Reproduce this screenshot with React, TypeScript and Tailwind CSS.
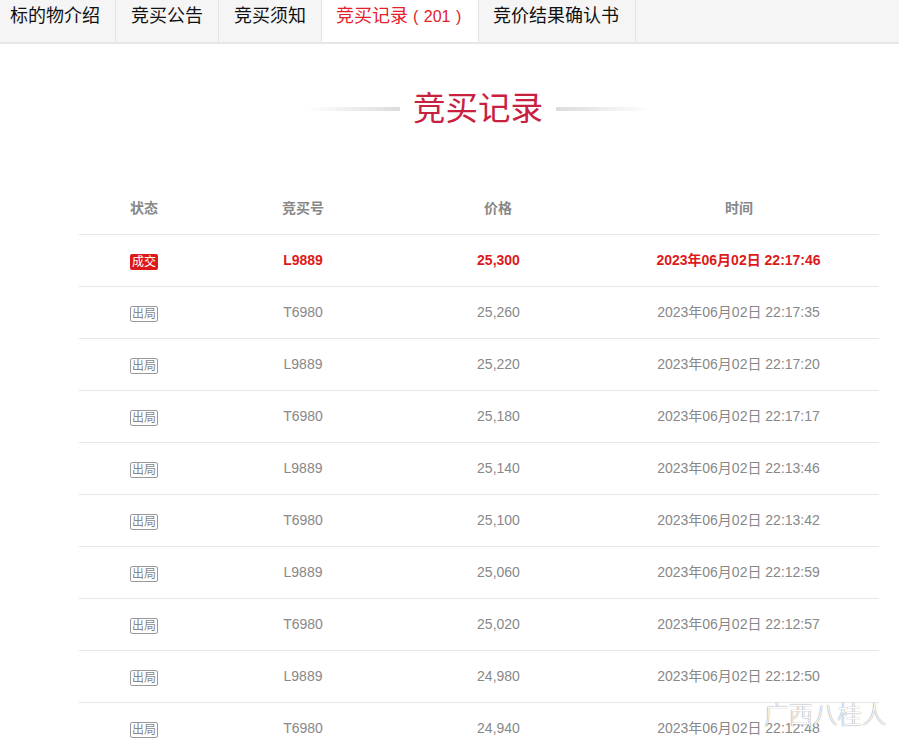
const cjk = "font-['Liberation_Sans','Noto_Sans_CJK_SC',sans-serif]";

const tabs = [
  { label: "标的物介绍", w: "w-[116px]", pl: "pl-[10px]" },
  { label: "竞买公告", w: "w-[103px]", pl: "pl-[15px]" },
  { label: "竞买须知", w: "w-[103px]", pl: "pl-[15px]" },
  { label: "竞买记录", w: "w-[157px]", pl: "pl-[14px]", active: true },
  { label: "竞价结果确认书", w: "w-[157px]", pl: "pl-[14px]" },
];

const rows = [
  ["L9889", "25,300", "2023年06月02日 22:17:46"],
  ["T6980", "25,260", "2023年06月02日 22:17:35"],
  ["L9889", "25,220", "2023年06月02日 22:17:20"],
  ["T6980", "25,180", "2023年06月02日 22:17:17"],
  ["L9889", "25,140", "2023年06月02日 22:13:46"],
  ["T6980", "25,100", "2023年06月02日 22:13:42"],
  ["L9889", "25,060", "2023年06月02日 22:12:59"],
  ["T6980", "25,020", "2023年06月02日 22:12:57"],
  ["L9889", "24,980", "2023年06月02日 22:12:50"],
  ["T6980", "24,940", "2023年06月02日 22:12:48"],
];

const gridCols = "grid grid-cols-[130px_188px_202px_280px] items-center text-center";

export default function App() {
  return (
    <div className={`relative h-[745px] w-[899px] overflow-hidden bg-white ${cjk}`}>
      <div className="flex h-[44px] border-b-2 border-[#e6e6e6] bg-[#f5f5f5]">
        {tabs.map((t) => (
          <div
            key={t.label}
            className={`${t.w} ${t.pl} h-[42px] border-r border-[#e4e4e4] pt-[2px] text-[18px] leading-[28px] whitespace-nowrap ${
              t.active ? "bg-white text-[#e4202c]" : "text-[#111]"
            }`}
          >
            {t.label}
            {t.active && (
              <span className="ml-[5px] text-[16px]">
                ( <span className="mx-[1px]">201</span> )
              </span>
            )}
          </div>
        ))}
      </div>

      <div className="mt-[43px] flex items-center justify-center pl-[57px]">
        <div className="h-[4px] w-[96px] bg-gradient-to-r from-white to-[#dcdcdc]" />
        <h1 className="mx-[13px] text-[32.5px] leading-[44px] font-normal text-[#c8203f]">竞买记录</h1>
        <div className="h-[4px] w-[96px] bg-gradient-to-r from-[#dcdcdc] to-white" />
      </div>

      <div className="ml-[79px] mt-[51px] w-[800px]">
        <div className={`${gridCols} h-[53px] border-b border-[#e6e6e6] text-[14px] font-bold text-[#888]`}>
          <div>状态</div>
          <div>竞买号</div>
          <div>价格</div>
          <div>时间</div>
        </div>
        {rows.map((r, i) => {
          const win = i === 0;
          return (
            <div
              key={i}
              className={`${gridCols} h-[52px] border-b border-[#e6e6e6] text-[14px] ${
                win ? "font-bold text-[#dd1a1a]" : "text-[#888]"
              }`}
            >
              <div className="flex justify-center pt-[2px]">
                <span
                  className={`flex h-[16px] w-[28px] items-center justify-center rounded-[2px] text-[12px] leading-none font-normal ${
                    win ? "bg-[#dd1a1a] text-white" : "border border-[#999] text-[#888]"
                  }`}
                >
                  {win ? "成交" : "出局"}
                </span>
              </div>
              <div className="pb-[1px]">{r[0]}</div>
              <div className="pb-[1px] pl-[1px]">{r[1]}</div>
              <div className="pb-[1px] pr-[1px]">{r[2]}</div>
            </div>
          );
        })}
      </div>

      <div className="absolute left-[764px] top-[700px] text-[24.5px] leading-[32px] font-light text-white [text-shadow:0_0_1px_#555] whitespace-nowrap">
        广西八桂人
      </div>
    </div>
  );
}
